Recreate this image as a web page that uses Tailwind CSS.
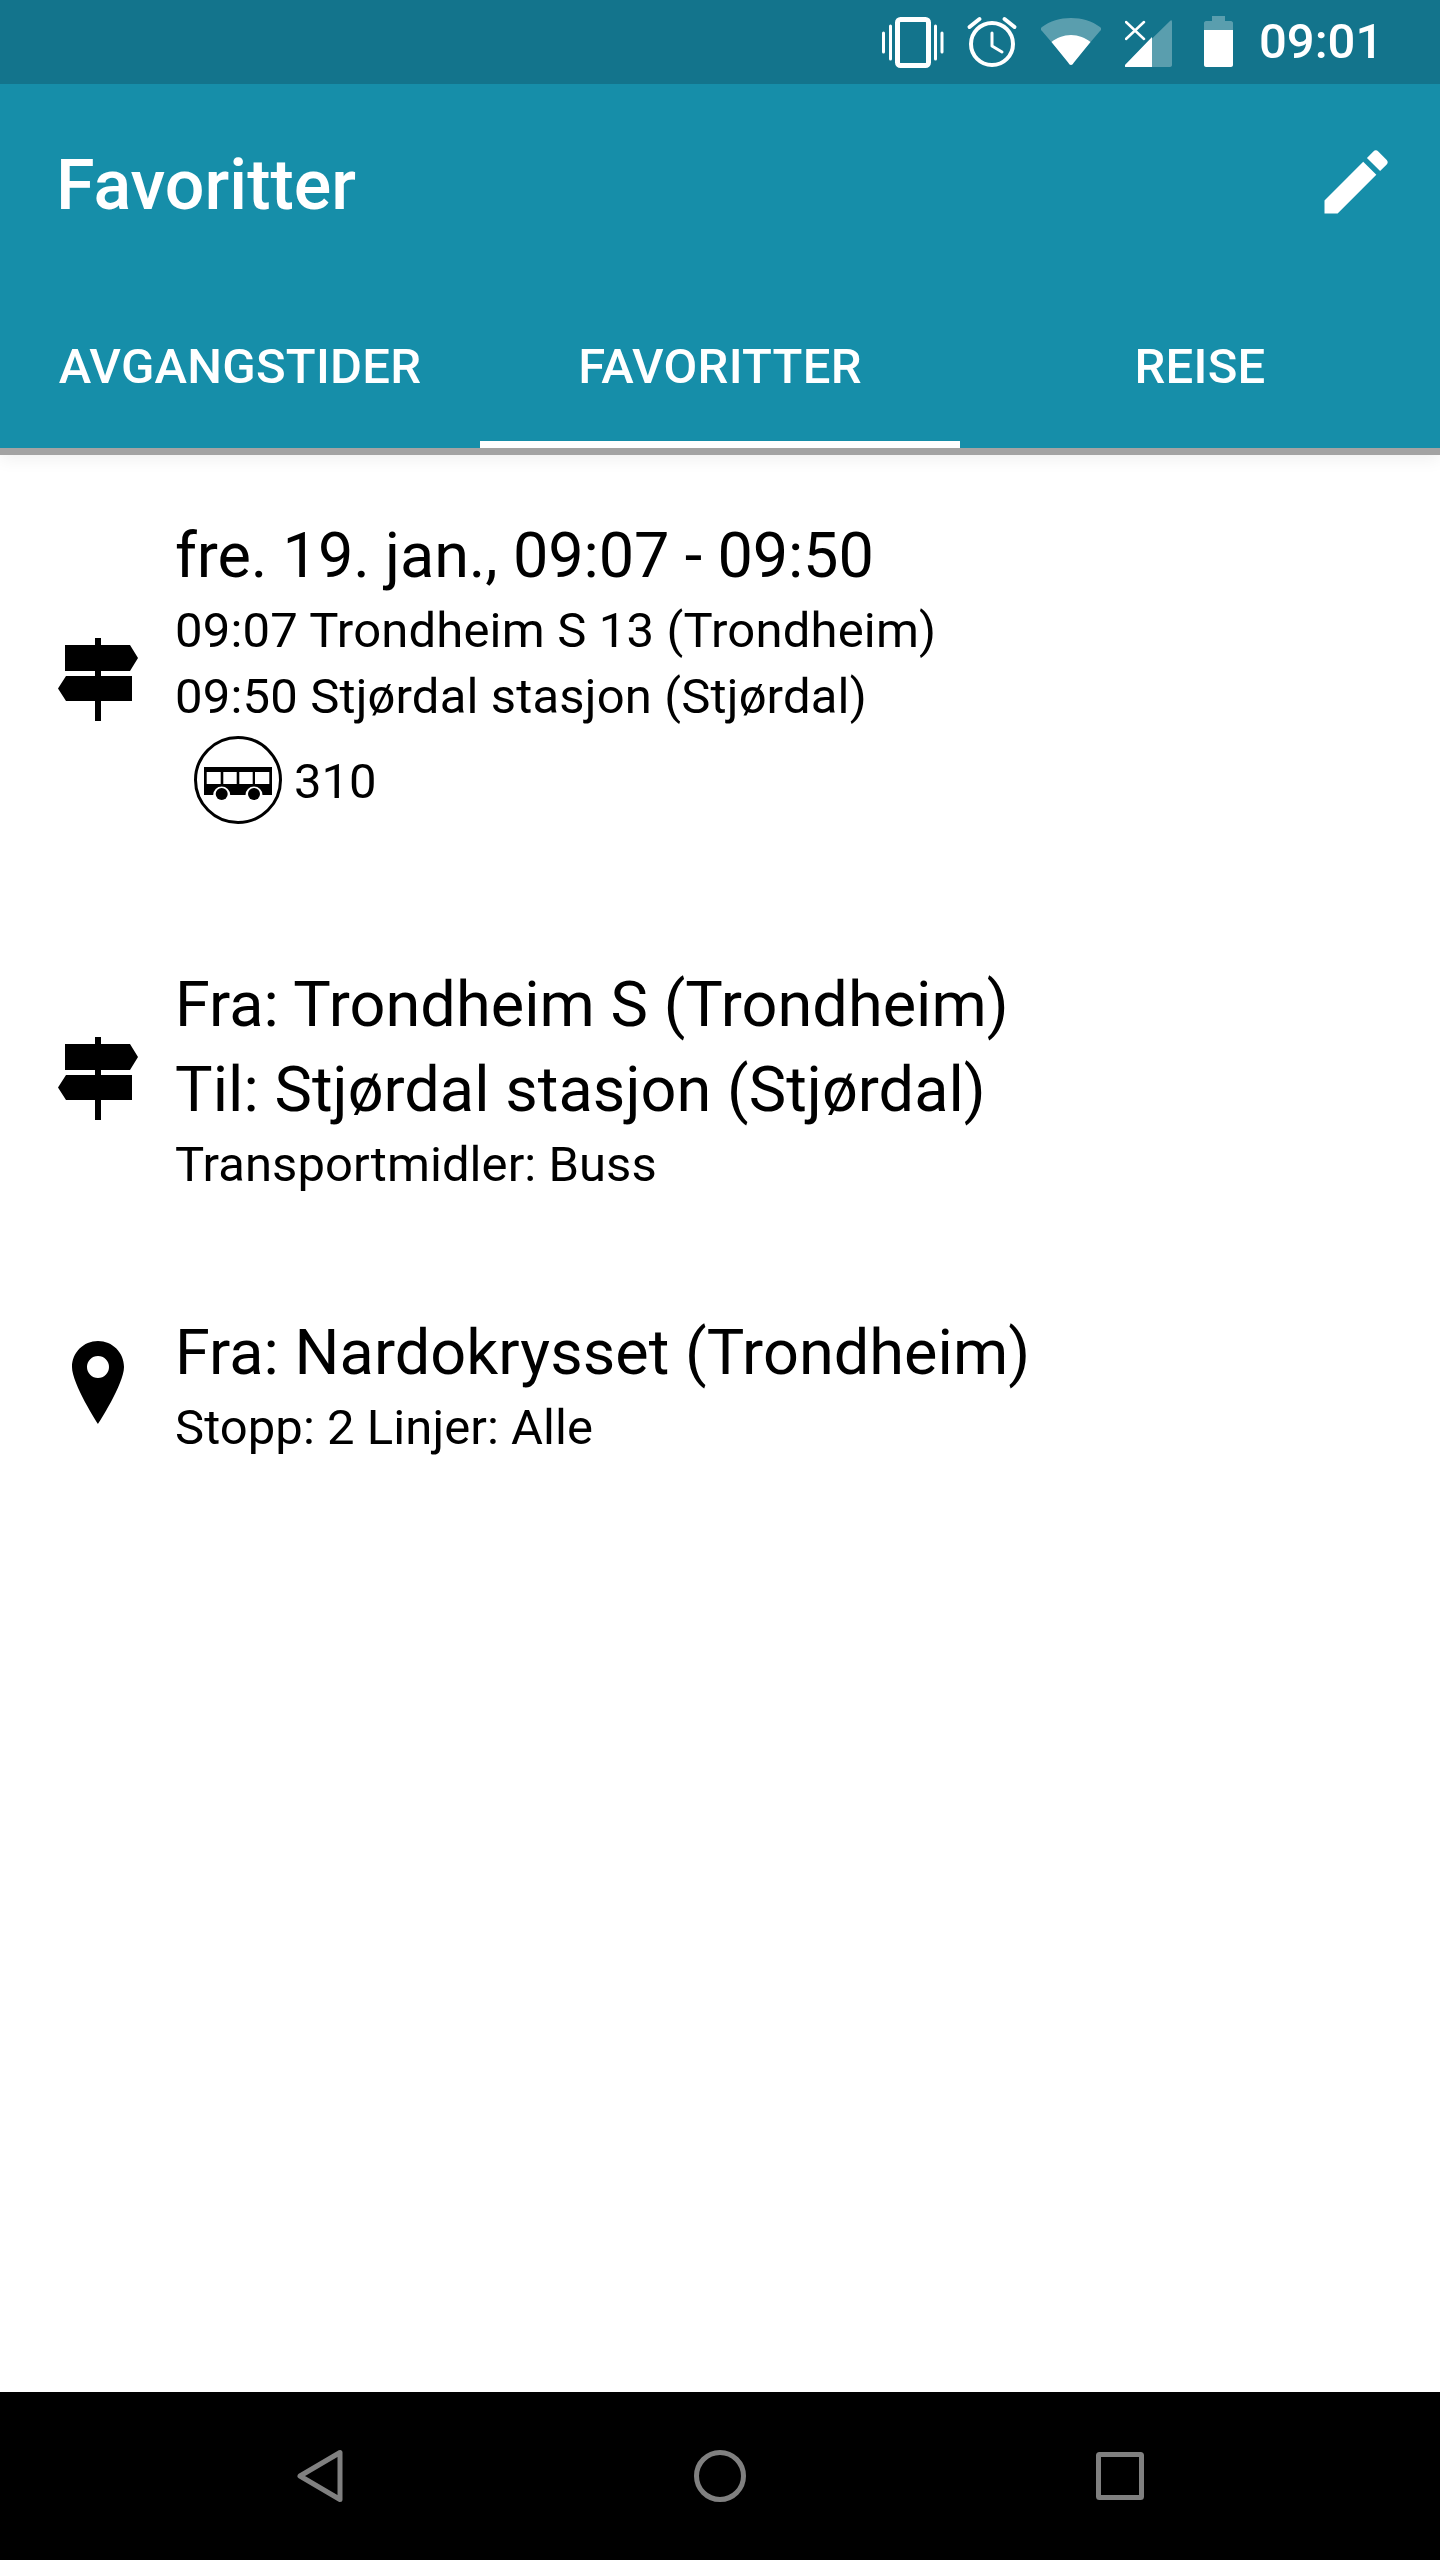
<!DOCTYPE html>
<html lang="nb">
<head>
  <meta charset="UTF-8" />
  <title>Favoritter</title>
  <script src="https://cdn.jsdelivr.net/npm/@tailwindcss/browser@4"></script>
</head>
<body class="bg-white font-['Roboto',sans-serif] text-black">
  <div class="flex flex-col w-[1440px] h-[2560px] overflow-hidden">

    <!-- status bar -->
    <div class="flex justify-end items-start h-[84px] bg-[#13748c] text-white shrink-0 pr-[56px]">
      <svg class="w-[62px] h-[84px]" viewBox="881 0 62 84" fill="none" stroke="#fff">
        <rect x="896.5" y="19.5" width="31" height="46" rx="3" stroke-width="5" />
        <path d="M882.5 33v19M889.5 26v33M934.5 26v33M941 33v19" stroke-width="3" stroke-linecap="round" />
      </svg>
      <svg class="ml-[22px] w-[52px] h-[84px]" viewBox="965 0 52 84" fill="none" stroke="#fff" stroke-linecap="round">
        <circle cx="991" cy="44" r="21" stroke-width="4" />
        <path d="M968.5 27l10-8M1013.5 27l-10-8" stroke-width="4" />
        <path d="M991 33v13l10 6" stroke-width="3" stroke-linejoin="round" />
      </svg>
      <svg class="ml-[23px] w-[60px] h-[84px]" viewBox="1040 0 60 84">
        <path d="M1070 65L1041 31c-2-2-1-3 0-4 8-6 18-9 29-9s21 3 29 9c1 1 2 2 0 4z" fill="#fff" fill-opacity="0.3" />
        <path d="M1070 65c-1 0-2-1-2.500-2L1050.500 42c5-4 12-7 19.500-7s14.500 3 19.500 7L1072.500 63c-.5 1-1.500 2-2.500 2z" fill="#fff" />
      </svg>
      <svg class="ml-[24px] w-[47px] h-[84px]" viewBox="1124 0 47 84">
        <path d="M1124 65l45-44c1-1 2-1 2 1v43c0 1-1 2-2 2h-44c-1 0-2-1-1-2z" fill="#fff" fill-opacity="0.3" />
        <path d="M1124 65l27-28v30h-26c-1 0-2-1-1-2z" fill="#fff" />
        <path d="M1125 22l18 17M1143 22l-18 17" stroke="#fff" stroke-width="2.500" stroke-linecap="round" fill="none" />
      </svg>
      <svg class="ml-[32px] w-[29px] h-[84px]" viewBox="1203 0 29 84">
        <path d="M1211 21v-5h13v5h6c1 0 2 1 2 2v7h-29v-7c0-1 1-2 2-2z" fill="#fff" fill-opacity="0.3" />
        <path d="M1203 30h29v35c0 1-1 2-2 2h-25c-1 0-2-1-2-2z" fill="#fff" />
      </svg>
      <span class="ml-[26px] w-[125px] text-[49px] font-medium leading-[84px]">09:01</span>
    </div>

    <!-- app bar -->
    <header class="bg-[#168ea9] text-white shrink-0 shadow-[0_7px_0_#a3a3a3,0_12px_16px_rgba(0,0,0,0.06)] relative">
      <div class="flex items-center justify-between h-[196px] pl-[56px] pr-[42px]">
        <h1 class="text-[70px] font-medium pt-[6px]">Favoritter</h1>
        <svg class="w-[84px] h-[84px]" viewBox="0 0 24 24" fill="#fff">
          <path d="M3 17.250V21h3.750L17.810 9.940l-3.750-3.750L3 17.250zM20.710 7.040a1 1 0 0 0 0-1.410l-2.340-2.340a1 1 0 0 0-1.410 0l-1.830 1.830 3.750 3.750 1.830-1.830z" />
        </svg>
      </div>
      <nav class="grid grid-cols-3 h-[168px] text-[49px] font-medium tracking-[0.25px]">
        <div class="flex items-center justify-center pt-[6px]">AVGANGSTIDER</div>
        <div class="flex items-center justify-center border-b-[7px] border-white pt-[13px]">FAVORITTER</div>
        <div class="flex items-center justify-center pt-[6px]">REISE</div>
      </nav>
    </header>

    <!-- favorites list -->
    <main class="flex-1 pt-[66px]">
      <div class="flex items-center">
        <div class="w-[175px] pl-[58px] shrink-0">
          <svg class="w-[80px] h-[83px] mt-[20px]" viewBox="58 638 80 83">
            <path d="M95 638h6v7h29l8 13-8 13h-29v5h31v25h-31v20h-6v-20H66l-8-12.500 8-12.500h29v-5H65v-26h30z" />
          </svg>
        </div>
        <div>
          <p class="text-[63px] leading-[84px] tracking-[-0.14px]">fre. 19. jan., 09:07 - 09:50</p>
          <p class="text-[49px] leading-[66px] tracking-[0.17px]">09:07 Trondheim S 13 (Trondheim)</p>
          <p class="text-[49px] leading-[66px] tracking-[0.17px]">09:50 Stjørdal stasjon (Stjørdal)</p>
          <div class="flex items-center mt-[6px] ml-[19px]">
            <svg class="w-[88px] h-[88px]" viewBox="0 0 88 88">
              <circle cx="44" cy="44" r="42.500" fill="none" stroke="#000" stroke-width="3" />
              <path fill-rule="evenodd" d="M10 31h68v28H68.500a8.500 8.500 0 0 0-17 0H36.200a8.500 8.500 0 0 0-17 0H10zM12.700 36v12h14V36zM29.300 36v12h13.400V36zM45.300 36v12h13.400V36zM61 36v12h14.300V36z" />
              <circle cx="27.700" cy="58" r="6" />
              <circle cx="60" cy="58" r="6" />
            </svg>
            <span class="ml-[12px] pt-[3px] text-[49px]">310</span>
          </div>
        </div>
      </div>

      <div class="flex items-center mt-[138px]">
        <div class="w-[175px] pl-[58px] shrink-0">
          <svg class="w-[80px] h-[83px] mb-[4px]" viewBox="58 638 80 83">
            <path d="M95 638h6v7h29l8 13-8 13h-29v5h31v25h-31v20h-6v-20H66l-8-12.500 8-12.500h29v-5H65v-26h30z" />
          </svg>
        </div>
        <div>
          <p class="text-[63px] leading-[85px] tracking-[0.06px]">Fra: Trondheim S (Trondheim)</p>
          <p class="text-[63px] leading-[85px] tracking-[0.06px]">Til: Stjørdal stasjon (Stjørdal)</p>
          <p class="text-[49px] leading-[66px] tracking-[0.06px]">Transportmidler: Buss</p>
        </div>
      </div>

      <div class="flex items-center mt-[112px]">
        <div class="w-[175px] pl-[72px] shrink-0">
          <svg class="w-[52px] h-[83px] mb-[6px]" viewBox="0 0 52 83">
            <path fill-rule="evenodd" d="M26 0C11.600 0 0 11.500 0 26c0 17 26 57 26 57s26-40 26-57C52 11.500 40.400 0 26 0zM26 15a11 11 0 1 1 0 22 11 11 0 0 1 0-22z" />
          </svg>
        </div>
        <div>
          <p class="text-[63px] leading-[85px] tracking-[0.06px]">Fra: Nardokrysset (Trondheim)</p>
          <p class="text-[49px] leading-[66px] tracking-[0.06px]">Stopp: 2 Linjer: Alle</p>
        </div>
      </div>
    </main>

    <!-- navigation bar -->
    <footer class="grid grid-cols-3 items-center h-[168px] bg-black shrink-0 px-[120px]">
      <svg class="w-[52px] h-[60px] justify-self-center" viewBox="0 0 52 60" fill="none" stroke="#808080" stroke-width="5" stroke-linejoin="round">
        <path d="M46 6.500v47L6 30z" />
      </svg>
      <svg class="w-[52px] h-[52px] justify-self-center" viewBox="0 0 52 52" fill="none" stroke="#808080" stroke-width="5">
        <circle cx="26" cy="26" r="23.500" />
      </svg>
      <svg class="w-[48px] h-[48px] justify-self-center" viewBox="0 0 48 48" fill="none" stroke="#808080" stroke-width="5" stroke-linejoin="round">
        <rect x="2.500" y="2.500" width="43" height="43" rx="1" />
      </svg>
    </footer>
  </div>
</body>
</html>
